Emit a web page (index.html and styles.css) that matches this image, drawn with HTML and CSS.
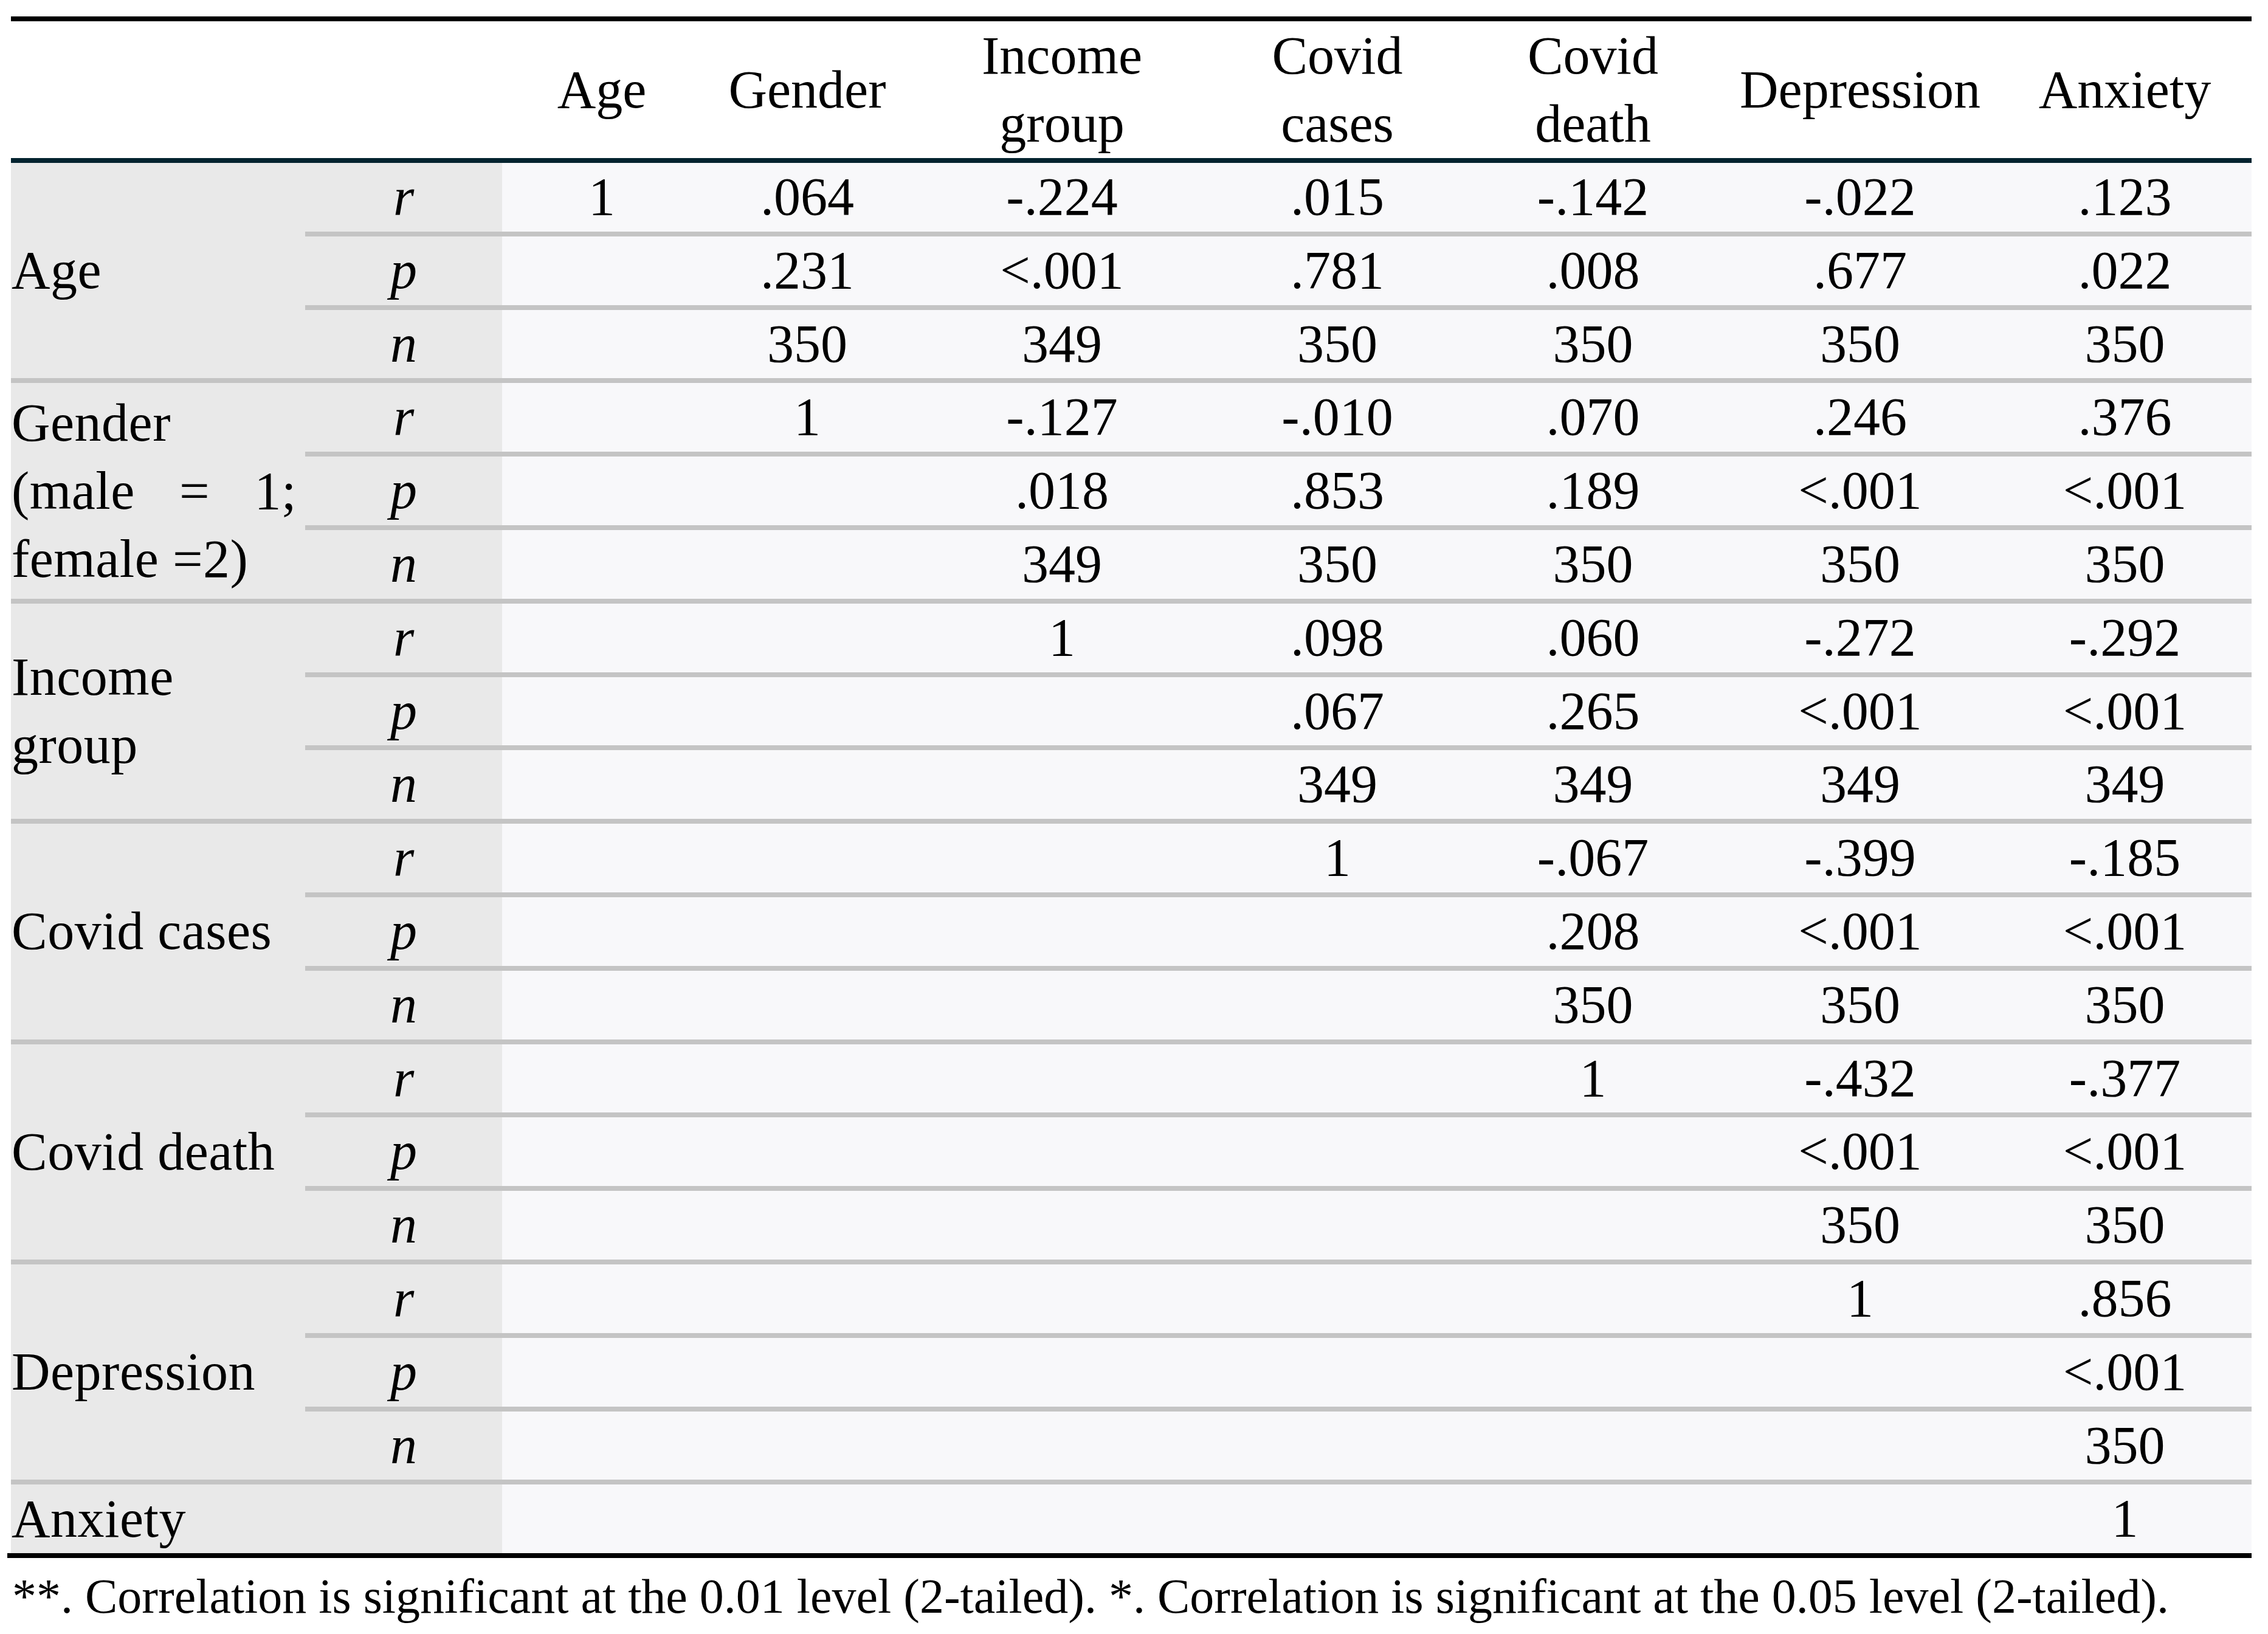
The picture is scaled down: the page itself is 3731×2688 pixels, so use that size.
FILE: index.html
```html
<!DOCTYPE html>
<html lang="en">
<head>
<meta charset="utf-8">
<title>Correlation matrix</title>
<link rel="stylesheet" href="styles.css">
</head>
<body>
<div class="page">
  <div class="rule-top"></div>
  <table class="corr">
    <colgroup>
      <col class="c-var"><col class="c-stat"><col class="c-age"><col class="c-gender"><col class="c-income"><col class="c-cases"><col class="c-death"><col class="c-dep"><col class="c-anx">
    </colgroup>
    <thead>
      <tr>
        <th colspan="2"></th>
        <th>Age</th>
        <th>Gender</th>
        <th>Income<br>group</th>
        <th>Covid<br>cases</th>
        <th>Covid<br>death</th>
        <th>Depression</th>
        <th>Anxiety</th>
      </tr>
    </thead>
    <tbody>
      <tr><th class="var" rowspan="3">Age</th><td class="stat">r</td><td>1</td><td>.064</td><td>-.224</td><td>.015</td><td>-.142</td><td>-.022</td><td>.123</td></tr>
      <tr><td class="stat">p</td><td></td><td>.231</td><td>&lt;.001</td><td>.781</td><td>.008</td><td>.677</td><td>.022</td></tr>
      <tr><td class="stat">n</td><td></td><td>350</td><td>349</td><td>350</td><td>350</td><td>350</td><td>350</td></tr>

      <tr><th class="var" rowspan="3">Gender (male = 1; female =2)</th><td class="stat">r</td><td></td><td>1</td><td>-.127</td><td>-.010</td><td>.070</td><td>.246</td><td>.376</td></tr>
      <tr><td class="stat">p</td><td></td><td></td><td>.018</td><td>.853</td><td>.189</td><td>&lt;.001</td><td>&lt;.001</td></tr>
      <tr><td class="stat">n</td><td></td><td></td><td>349</td><td>350</td><td>350</td><td>350</td><td>350</td></tr>

      <tr><th class="var" rowspan="3">Income group</th><td class="stat">r</td><td></td><td></td><td>1</td><td>.098</td><td>.060</td><td>-.272</td><td>-.292</td></tr>
      <tr><td class="stat">p</td><td></td><td></td><td></td><td>.067</td><td>.265</td><td>&lt;.001</td><td>&lt;.001</td></tr>
      <tr><td class="stat">n</td><td></td><td></td><td></td><td>349</td><td>349</td><td>349</td><td>349</td></tr>

      <tr><th class="var" rowspan="3">Covid cases</th><td class="stat">r</td><td></td><td></td><td></td><td>1</td><td>-.067</td><td>-.399</td><td>-.185</td></tr>
      <tr><td class="stat">p</td><td></td><td></td><td></td><td></td><td>.208</td><td>&lt;.001</td><td>&lt;.001</td></tr>
      <tr><td class="stat">n</td><td></td><td></td><td></td><td></td><td>350</td><td>350</td><td>350</td></tr>

      <tr><th class="var" rowspan="3">Covid death</th><td class="stat">r</td><td></td><td></td><td></td><td></td><td>1</td><td>-.432</td><td>-.377</td></tr>
      <tr><td class="stat">p</td><td></td><td></td><td></td><td></td><td></td><td>&lt;.001</td><td>&lt;.001</td></tr>
      <tr><td class="stat">n</td><td></td><td></td><td></td><td></td><td></td><td>350</td><td>350</td></tr>

      <tr><th class="var" rowspan="3">Depression</th><td class="stat">r</td><td></td><td></td><td></td><td></td><td></td><td>1</td><td>.856</td></tr>
      <tr><td class="stat">p</td><td></td><td></td><td></td><td></td><td></td><td></td><td>&lt;.001</td></tr>
      <tr><td class="stat">n</td><td></td><td></td><td></td><td></td><td></td><td></td><td>350</td></tr>

      <tr class="last"><th class="var">Anxiety</th><td class="stat"></td><td></td><td></td><td></td><td></td><td></td><td></td><td>1</td></tr>
    </tbody>
  </table>
  <div class="rule-bottom"></div>
  <p class="note">**. Correlation is significant at the 0.01 level (2-tailed). *. Correlation is significant at the 0.05 level (2-tailed).</p>
</div>
</body>
</html>
```

FILE: styles.css
```css
html, body {
  margin: 0;
  padding: 0;
  background: #ffffff;
}

body {
  font-family: "Liberation Serif", "Times New Roman", serif;
  color: #000000;
}

.page {
  padding: 27px 27px 0 18px;
  width: 3686px;
}

.rule-top {
  height: 8px;
  background: #000000;
}

.rule-bottom {
  height: 8px;
  background: #000000;
  margin-left: -6px;
}

.corr {
  table-layout: fixed;
  width: 3686px;
  border-collapse: separate;
  border-spacing: 0;
  font-size: 88px;
}

.c-var { width: 484px; }
.c-stat { width: 324px; }
.c-age { width: 328px; }
.c-gender { width: 348px; }
.c-income { width: 490px; }
.c-cases { width: 416px; }
.c-death { width: 425px; }
.c-dep { width: 454px; }
.c-anx { width: 417px; }

.corr thead th {
  height: 225px;
  padding: 0;
  font-weight: normal;
  line-height: 112px;
  text-align: center;
  vertical-align: middle;
  background: #ffffff;
  border-bottom: 8px solid #03232f;
}

.corr tbody td {
  padding: 0;
  height: 112.8px;
  line-height: 112.8px;
  text-align: center;
  vertical-align: middle;
  background: #f8f8fa;
  border-bottom: 8px solid #c4c4c4;
  white-space: nowrap;
}

.corr tbody td.stat {
  background: #e9e9e9;
  font-style: italic;
}

.corr tbody th.var {
  padding: 0 14px 0 1px;
  font-weight: normal;
  text-align: justify;
  line-height: 112px;
  letter-spacing: 0.5px;
  vertical-align: middle;
  background: #e9e9e9;
  border-bottom: 8px solid #c4c4c4;
}

.corr tbody tr.last td,
.corr tbody tr.last th.var {
  border-bottom: none;
}

.note {
  margin: 15px 0 0 2px;
  font-size: 80px;
  line-height: 96px;
  white-space: nowrap;
}
```
